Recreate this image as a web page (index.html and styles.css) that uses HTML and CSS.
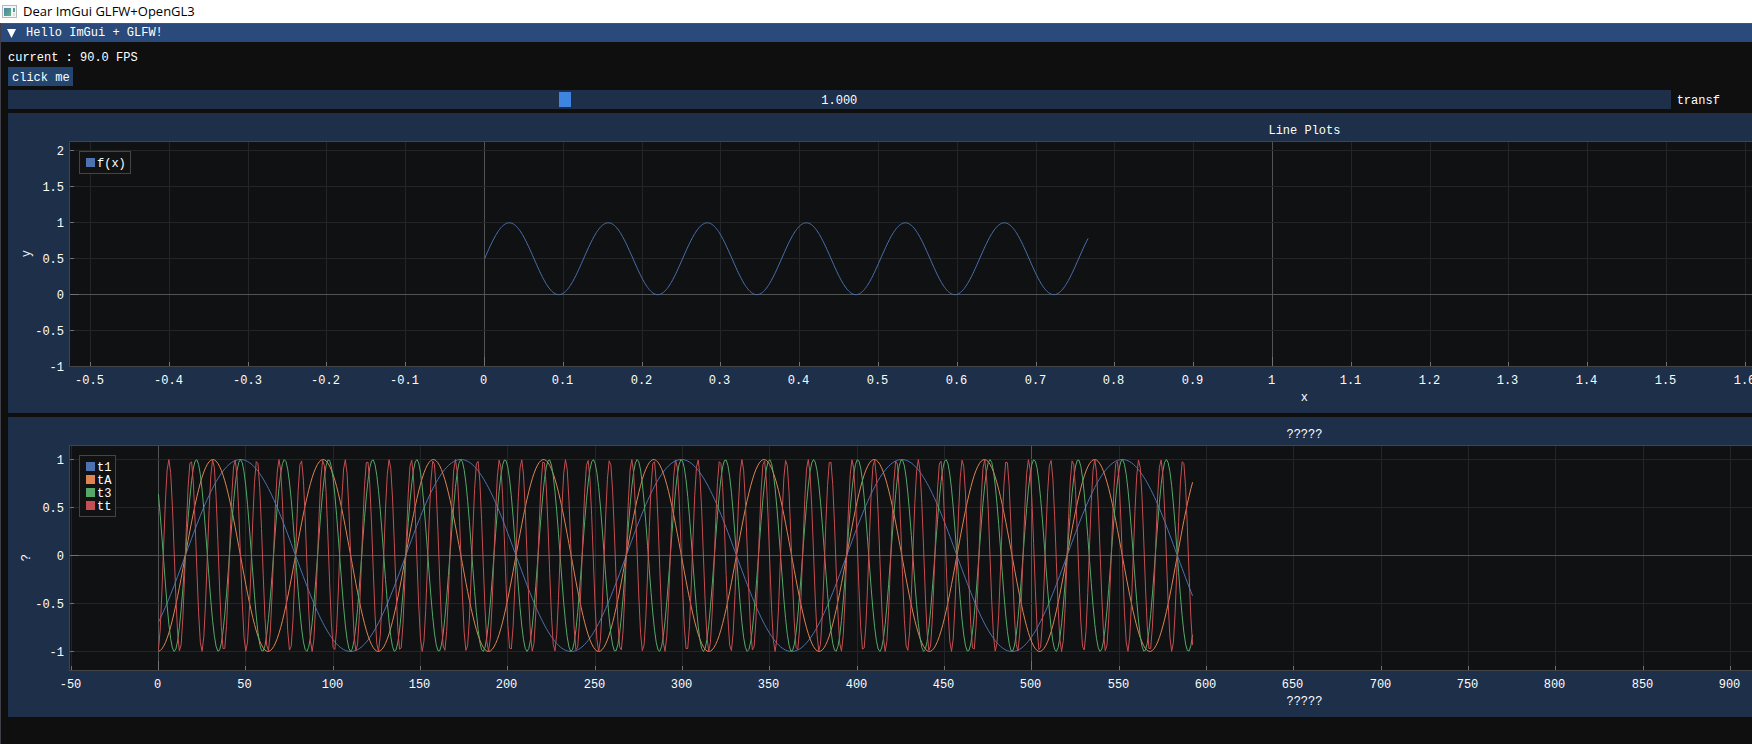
FILE: index.html
```html
<!DOCTYPE html>
<html lang="en">
<head>
    <meta charset="UTF-8">
    <title>Dear ImGui GLFW+OpenGL3</title>
    <link rel="stylesheet" href="styles.css">
</head>
<body>
    <header class="titlebar">
        <svg class="app-icon" width="15" height="13" viewBox="0 0 15 13">
            <defs>
                <linearGradient id="iconFill" x1="0" y1="0" x2="1" y2="1">
                    <stop offset="0" stop-color="#4a83a8"></stop>
                    <stop offset="1" stop-color="#63b383"></stop>
                </linearGradient>
            </defs>
            <rect x="0.5" y="0.5" width="14" height="12" fill="#f4f6f6" stroke="#b4babc"></rect>
            <rect x="2" y="3" width="7" height="8" fill="url(#iconFill)"></rect>
            <rect x="11" y="3" width="2" height="4" fill="#5b9a95"></rect>
            <rect x="11" y="8" width="2" height="3" fill="#dde1e1"></rect>
        </svg>
        <span>Dear ImGui GLFW+OpenGL3</span>
    </header>

    <main class="window">
        <h1 class="window-title">
            <svg width="9" height="9" viewBox="0 0 9 9"><path d="M0 0H9L4.5 9Z" fill="#fff"></path></svg>
            Hello ImGui + GLFW!
        </h1>

        <div class="content">
            <div class="fps">current : 90.0 FPS</div>
            <button class="button" type="button">click me</button>

            <div class="slider-row">
                <div class="slider">
                    <input type="range" id="transf" min="0" max="3" step="0.001" value="1">
                    <output class="slider-value" id="transfValue" for="transf">1.000</output>
                </div>
                <label for="transf">transf</label>
            </div>

            <section class="plot">
                <h2 class="plot-title">Line Plots</h2>
                <div class="y-label"><span>y</span></div>
                <div class="plot-area">
                    <svg class="canvas" id="linePlot"></svg>
                    <ul class="legend">
                        <li><i class="swatch blue"></i>f(x)</li>
                    </ul>
                </div>
                <div class="x-label">x</div>
            </section>

            <section class="plot">
                <h2 class="plot-title">?????</h2>
                <div class="y-label"><span>?</span></div>
                <div class="plot-area">
                    <svg class="canvas" id="wavePlot"></svg>
                    <ul class="legend">
                        <li><i class="swatch blue"></i>t1</li>
                        <li><i class="swatch orange"></i>tA</li>
                        <li><i class="swatch green"></i>t3</li>
                        <li><i class="swatch red"></i>tt</li>
                    </ul>
                </div>
                <div class="x-label">?????</div>
            </section>
        </div>
    </main>

    <script src="plots.js"></script>
</body>
</html>
```

FILE: styles.css
```css
* {
    box-sizing: border-box;
}
body {
    margin: 0;
    min-height: 100vh;
    display: flex;
    flex-direction: column;
    overflow: hidden;
    background: #0f0f0f;
    color: #fff;
    font-family: "Liberation Mono", monospace;
    font-size: 12px;
    line-height: 13px;
}
h1, h2 {
    margin: 0;
    font-size: 12px;
    font-weight: normal;
}
.titlebar {
    display: flex;
    align-items: center;
    gap: 6px;
    height: 23px;
    padding-left: 2px;
    background: #fff;
    color: #000;
    font-family: "Open Sans", sans-serif;
    font-size: 13px;
}

/* the window is wider than the screen and runs off its right edge */
.window {
    flex: 1;
    width: 146vw;
    border-left: 1px solid #3f3f48;
}
.window-title {
    display: flex;
    align-items: center;
    gap: 10px;
    height: 19px;
    padding-left: 6px;
    border-top: 1px solid #40557c;
    background: #294a7a;
}
.content {
    display: flex;
    flex-direction: column;
    align-items: flex-start;
    gap: 4px;
    padding: 8px 8px 8px 7px;
}
.fps,
.plot-title {
    height: 13px;
    line-height: 17px;
}
.button {
    height: 19px;
    padding: 4px 3px 0 4px;
    border: none;
    background: #234570;
    color: #fff;
    font: inherit;
}
.button:hover {
    background: #4296fa;
}

/* slider */
.slider-row {
    display: flex;
    align-items: center;
    gap: 6px;
    width: 100%;
}
.slider-row label,
.slider-value {
    padding-top: 3px;
}
.slider {
    display: grid;
    flex: 0 0 calc(146vw * 0.65);
    height: 19px;
    background: #1e2f49;
}
.slider input,
.slider-value {
    grid-area: 1 / 1;
}
.slider input {
    appearance: none;
    width: 100%;
    height: 19px;
    margin: 0;
    padding: 0 2px;
    background: none;
}
.slider input::-webkit-slider-thumb {
    appearance: none;
    width: 12px;
    height: 15px;
    background: #3d85e0;
}
.slider-value {
    place-self: center;
    pointer-events: none;
}

/* plots */
.plot {
    display: grid;
    grid-template-columns: 51px 1fr;
    grid-template-rows: 13px 226px 13px;
    row-gap: 5px;
    width: 100%;
    height: 300px;
    padding: 10px;
    background: #1e2f49;
}
.plot-title,
.x-label {
    grid-column: 2;
    text-align: center;
}
.x-label {
    padding-top: 20px;
}
.y-label {
    grid-column: 1;
    display: flex;
    align-items: center;
    padding-left: 3px;
}
.y-label span {
    writing-mode: vertical-rl;
    transform: rotate(180deg);
}
.plot-area {
    position: relative;
    background: #101112;
}
.canvas {
    display: block;
    width: 100%;
    height: 100%;
    overflow: visible;
}
.canvas text {
    fill: #fff;
}
.canvas path {
    fill: none;
}
.frame {
    stroke: #434348;
    fill: none;
}
.grid-minor {
    stroke: #242526;
}
.grid-major {
    stroke: #525354;
}
.tick {
    stroke: #707172;
}
.legend {
    position: absolute;
    top: 10px;
    left: 10px;
    margin: 0;
    padding: 6px 4px 2px 6px;
    border: 1px solid #434348;
    background: #121213;
    list-style: none;
}
.legend li {
    display: flex;
    gap: 2px;
}
.swatch {
    width: 9px;
    height: 9px;
}
.blue {
    background: #4c72b0;
    stroke: #4c72b0;
}
.orange {
    background: #dd8452;
    stroke: #dd8452;
}
.green {
    background: #55a868;
    stroke: #55a868;
}
.red {
    background: #c44e52;
    stroke: #c44e52;
}
```

FILE: plots.js
```js
const SVG_NS = "http://www.w3.org/2000/svg";

const linePlot = {
    id: "linePlot",
    x: { min: -0.5267, max: 2.608, step: 0.1, major: 10 },
    y: { min: -1, max: 2.132, step: 0.5, major: 10 },
    series: [
        { color: "blue", from: 0, to: 0.7665, step: 0.001, fn: x => 0.5 + 0.5 * Math.sin(50 * x) }
    ]
};

const wave = k => x => Math.sin(k * (0.04979 * x - 0.767));

const wavePlot = {
    id: "wavePlot",
    x: { min: -50.9, max: 1363, step: 50, major: 10 },
    y: { min: -1.198, max: 1.146, step: 0.5, major: 10 },
    series: [
        { color: "blue", from: 0, to: 592, step: 1, fn: wave(1) },
        { color: "orange", from: 0, to: 592, step: 1, fn: wave(2) },
        { color: "green", from: 0, to: 592, step: 1, fn: wave(5) },
        { color: "red", from: 0, to: 592, step: 1, fn: wave(10) }
    ]
};

function add(svg, name, attrs, text) {
    const el = document.createElementNS(SVG_NS, name);
    for (const key in attrs) el.setAttribute(key, attrs[key]);
    if (text !== undefined) el.textContent = text;
    svg.appendChild(el);
}

function line(svg, cls, x1, y1, x2, y2) {
    add(svg, "line", { class: cls, x1, y1, x2, y2 });
}

// tick numbers n, where the tick's value is n * step
function ticks(axis) {
    const list = [];
    const last = Math.floor(axis.max / axis.step + 0.001);
    for (let n = Math.ceil(axis.min / axis.step - 0.001); n <= last; n++) list.push(n);
    return list;
}

function draw(plot) {
    const svg = document.getElementById(plot.id);
    const w = Math.round(svg.clientWidth);
    const h = svg.clientHeight;
    // part of the plot that is on screen
    const visible = window.innerWidth - svg.getBoundingClientRect().left;
    const px = v => (v - plot.x.min) / (plot.x.max - plot.x.min) * (w - 1) + 0.5;
    const py = v => (plot.y.max - v) / (plot.y.max - plot.y.min) * (h - 1) + 0.5;
    const snap = v => Math.floor(v) + 0.5;
    const label = (n, step) => String(Number((n * step).toFixed(2)));

    svg.innerHTML = "";

    for (const n of ticks(plot.x)) {
        const x = snap(px(n * plot.x.step));
        if (x > visible) break;
        const major = n % plot.x.major === 0;
        line(svg, major ? "grid-major" : "grid-minor", x, 0, x, h);
        line(svg, "tick", x, h - (major ? 10 : 5), x, h);
        add(svg, "text", { x: x - 1, y: h + 17, "text-anchor": "middle" }, label(n, plot.x.step));
    }
    for (const n of ticks(plot.y)) {
        const y = snap(py(n * plot.y.step));
        const major = n % plot.y.major === 0;
        line(svg, major ? "grid-major" : "grid-minor", 0, y, w, y);
        line(svg, "tick", 0, y, major ? 10 : 5, y);
        add(svg, "text", { x: -5, y: y + 4, "text-anchor": "end" }, label(n, plot.y.step));
    }
    add(svg, "rect", { class: "frame", x: 0.5, y: 0.5, width: w - 1, height: h - 1 });

    for (const s of plot.series) {
        const points = [];
        for (let x = s.from; x <= s.to; x += s.step) {
            points.push(px(x).toFixed(2) + " " + py(s.fn(x)).toFixed(2));
        }
        add(svg, "path", { class: s.color, d: "M" + points.join("L") });
    }
}

function drawAll() {
    draw(linePlot);
    draw(wavePlot);
}

const slider = document.getElementById("transf");
slider.addEventListener("input", () => {
    document.getElementById("transfValue").textContent = Number(slider.value).toFixed(3);
});

window.addEventListener("resize", drawAll);
drawAll();
```
